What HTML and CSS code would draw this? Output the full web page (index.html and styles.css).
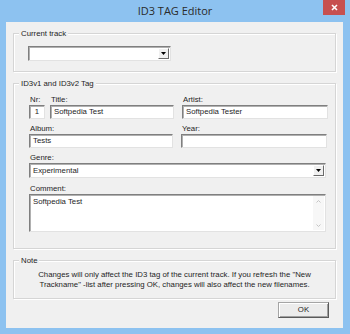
FILE: index.html
```html
<!DOCTYPE html>
<html lang="en">

<head>
  <meta charset="UTF-8">
  <title>ID3 TAG Editor</title>
  <link rel="stylesheet" href="styles.css">
</head>
<body>
  <div class="window">
    <div class="titlebar">
      <span class="title">ID3 TAG Editor</span>
      <span class="close">
        <svg width="7" height="7" viewBox="0 0 7 7"><path d="M1 1L6 6M6 1L1 6" stroke="#fff" stroke-width="1.6"/></svg>
      </span>
    </div>
    <div class="client">
      <fieldset class="group group-track">
        <legend>Current track</legend>
        <div class="combo combo-track">
          <span class="combo-text"></span>
          <span class="combo-btn"><svg width="5" height="3" viewBox="0 0 5 3"><path d="M0 0H5L2.5 3Z" fill="#000"/></svg></span>
        </div>
      </fieldset>

      <fieldset class="group group-tag">
        <legend>ID3v1 and ID3v2 Tag</legend>
        <div class="row">
          <div class="field f-nr">
            <span class="lbl">Nr:</span>
            <span class="edit center">1</span>
          </div>
          <div class="field f-title">
            <span class="lbl">Title:</span>
            <span class="edit">Softpedia Test</span>
          </div>
          <div class="field f-artist">
            <span class="lbl">Artist:</span>
            <span class="edit">Softpedia Tester</span>
          </div>
        </div>
        <div class="row">
          <div class="field f-album">
            <span class="lbl">Album:</span>
            <span class="edit">Tests</span>
          </div>
          <div class="field f-year">
            <span class="lbl">Year:</span>
            <span class="edit"></span>
          </div>
        </div>
        <div class="row">
          <div class="field f-wide">
            <span class="lbl">Genre:</span>
            <div class="combo">
              <span class="combo-text">Experimental</span>
              <span class="combo-btn"><svg width="5" height="3" viewBox="0 0 5 3"><path d="M0 0H5L2.5 3Z" fill="#000"/></svg></span>
            </div>
          </div>
        </div>
        <div class="row row-comment">
          <div class="field f-wide">
            <span class="lbl">Comment:</span>
            <div class="memo">
              <span class="memo-text">Softpedia Test</span>
              <span class="scroll">
                <svg width="5" height="3" viewBox="0 0 5 3"><path d="M0.5 2.5L2.5 0.5L4.5 2.5" fill="none" stroke="#c4c4c4"/></svg>
                <svg width="5" height="3" viewBox="0 0 5 3"><path d="M0.5 0.5L2.5 2.5L4.5 0.5" fill="none" stroke="#c4c4c4"/></svg>
              </span>
            </div>
          </div>
        </div>
      </fieldset>

      <fieldset class="group group-note">
        <legend>Note</legend>
        <p class="note">Changes will only affect the ID3 tag of the current track. If you refresh the "New<br>Trackname" -list after pressing OK, changes will also affect the new filenames.</p>
      </fieldset>

      <div class="buttons">
        <span class="btn">OK</span>
      </div>
    </div>
  </div>
</body>

</html>
```

FILE: styles.css
```css
* {
  margin: 0;
  padding: 0;
  box-sizing: border-box;
}

body {
  width: 350px;
  height: 334px;
  overflow: hidden;
  font-family: "Liberation Sans", Arial, sans-serif;
  font-size: 7.8px;
  color: #1e1e1e;
}

.window {
  width: 350px;
  height: 334px;
  background: #8dc2f0;
}

.titlebar {
  height: 22px;
  display: grid;
  grid-template-columns: 1fr;
}

.title {
  grid-area: 1 / 1;
  text-align: center;
  font-family: "Open Sans", sans-serif;
  font-size: 11px;
  line-height: 22px;
  color: #2a2a2a;
}

.close {
  grid-area: 1 / 1;
  justify-self: end;
  width: 22px;
  height: 15px;
  margin-right: 5px;
  background: #c75050;
  display: flex;
  align-items: center;
  justify-content: center;
}

.client {
  margin: 0 7px 0 6px;
  height: 306px;
  background: #f0f0f0;
  padding: 6px 7px 0;
}

.group {
  border: 1px solid #d5d5d5;
  box-shadow: 1px 1px 0 #fff, inset 1px 1px 0 #fff;
  padding: 0;
  min-width: 0;
}

.group legend {
  margin-left: 5px;
  padding: 0 2px;
  line-height: 11px;
  background: #f0f0f0;
}

.group-track {
  padding: 7px 0 10px 14px;
}

.group-track legend {
  margin-left: -9px;
}

.group-tag {
  margin-top: 6px;
  padding: 5px 0 16px 15px;
}

.group-tag legend {
  margin-left: -10px;
}

.group-note {
  margin-top: 6px;
  padding: 4px 0 8px;
}

.row {
  display: flex;
  gap: 5px;
}

.row + .row {
  margin-top: 4px;
}

.row-comment {
  margin-top: 5px !important;
}

.field {
  display: flex;
  flex-direction: column;
}

.lbl {
  line-height: 11px;
  padding-left: 1px;
}

.f-nr { width: 16px; }
.f-title { width: 124px; }
.f-artist { width: 146px; margin-left: 3px; }
.f-album { width: 144px; }
.f-year { width: 146px; margin-left: 3px; }
.f-wide { width: 297px; }

.edit,
.combo,
.memo {
  background: #fff;
  border: 1px solid;
  border-color: #7f7f7f #e2e2e2 #e2e2e2 #7f7f7f;
  box-shadow: inset 1px 1px 0 #b0b0b0;
}

.edit {
  height: 14px;
  line-height: 12px;
  padding-left: 3px;
  white-space: nowrap;
}

.edit.center {
  padding-left: 0;
  text-align: center;
}

.combo {
  height: 15px;
  display: flex;
  align-items: center;
  padding: 0 1px 0 3px;
}

.combo-track {
  width: 143px;
}

.combo-text {
  flex: 1;
  line-height: 12px;
}

.combo-btn {
  width: 11px;
  height: 11px;
  background: #f0f0f0;
  border: 1px solid;
  border-color: #fff #6a6a6a #6a6a6a #fff;
  display: flex;
  align-items: center;
  justify-content: center;
}

.memo {
  height: 38px;
  display: flex;
  padding: 2px 1px 1px 3px;
}

.memo-text {
  flex: 1;
  line-height: 10px;
}

.scroll {
  width: 11px;
  margin: -1px 0 0;
  background: #f7f7f7;
  display: flex;
  flex-direction: column;
  justify-content: space-between;
  align-items: center;
  padding: 4px 0 3px;
}

.note {
  text-align: center;
  line-height: 10px;
}

.buttons {
  display: flex;
  justify-content: flex-end;
  margin-top: 3px;
  padding-right: 7px;
}

.btn {
  width: 51px;
  height: 16px;
  line-height: 13px;
  text-align: center;
  background: #ececec;
  border: 1px solid;
  border-color: #a5a5a5 #5a5a5a #5a5a5a #a5a5a5;
  box-shadow: inset 1px 1px 0 #fff, inset -1px -1px 0 #a0a0a0;
}
```
